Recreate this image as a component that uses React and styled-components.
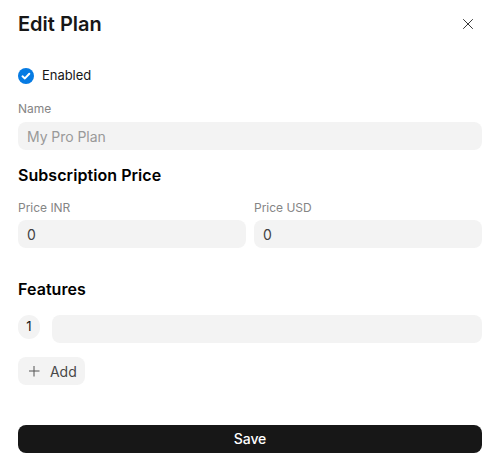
import React from "react";
import styled, { createGlobalStyle } from "styled-components";

const GlobalStyle = createGlobalStyle`
  *, *::before, *::after { box-sizing: border-box; }
  body { margin: 0; background: #fff; font-family: Inter, sans-serif; color: #171717; }
  button, input { font: inherit; }
`;

const Dialog = styled.main`
  width: 498px;
  height: 474px;
  padding: 10px 16px 0 18px;
  display: flex;
  flex-direction: column;
`;
const Header = styled.header`
  height: 28px;
  display: flex;
  align-items: center;
  justify-content: space-between;
`;
const Title = styled.h1`
  margin: 0;
  font-size: 20px;
  line-height: 28px;
  font-weight: 600;
`;
const CloseButton = styled.button`
  width: 28px;
  height: 28px;
  padding: 0;
  border: 0;
  background: transparent;
  display: grid;
  place-items: center;
`;
const CheckLabel = styled.label`
  margin-top: 30px;
  height: 16px;
  line-height: 14px;
  display: flex;
  align-items: flex-start;
  gap: 8px;
  font-size: 13px;
  letter-spacing: -0.05px;
`;
const Field = styled.div`
  flex: 1;
  display: flex;
  flex-direction: column;
`;
const NameField = styled(Field)`
  flex: none;
  margin-top: 18px;
`;
const Label = styled.label`
  height: 14px;
  line-height: 14px;
  margin-bottom: ${(p) => p.$gap}px;
  font-size: 12px;
  letter-spacing: -0.02px;
  color: #858585;
`;
const Input = styled.input`
  width: 100%;
  min-width: 0;
  height: 28px;
  padding: 1px 9px 0;
  border: 0;
  border-radius: 8px;
  background: #f3f3f3;
  color: #424242;
  font-size: 14px;
  letter-spacing: -0.05px;
  &::placeholder { color: #999; opacity: 1; }
`;
const Heading = styled.h2`
  margin: ${(p) => p.$top}px 0 0;
  height: 20px;
  line-height: 20px;
  font-size: 16px;
  font-weight: 600;
  letter-spacing: 0.06px;
  color: #000;
`;
const Prices = styled.div`
  display: flex;
  gap: 8px;
  margin-top: 16px;
`;
const FeatureRow = styled.div`
  display: flex;
  align-items: flex-start;
  gap: 12px;
  margin-top: 16px;
`;
const Badge = styled.span`
  flex: none;
  width: 22px;
  height: 24px;
  border-radius: 11px;
  background: #f3f3f3;
  font-size: 13px;
  line-height: 22px;
  text-align: center;
`;
const AddButton = styled.button`
  width: 67px;
  height: 28px;
  margin-top: 14px;
  padding: 0 8px;
  display: flex;
  align-items: center;
  gap: 8px;
  border: 0;
  border-radius: 8px;
  background: #f3f3f3;
  color: #484848;
  font-size: 14px;
  letter-spacing: -0.05px;
`;
const SaveButton = styled.button`
  flex: none;
  height: 28px;
  margin-top: 40px;
  padding: 0 0 1px;
  border: 0;
  border-radius: 8px;
  background: #171717;
  color: #fff;
  font-size: 14px;
  font-weight: 500;
  letter-spacing: -0.05px;
`;
const Body = styled.div`
  display: flex;
  flex-direction: column;
`;

export default function App() {
  return (
    <>
      <GlobalStyle />
      <Dialog>
        <Header>
          <Title>Edit Plan</Title>
          <CloseButton aria-label="Close">
            <svg width="16" height="16" viewBox="0 0 16 16" fill="none" stroke="#383838">
              <path d="M3.2 3.2l9.6 9.6M12.8 3.2L3.2 12.8" />
            </svg>
          </CloseButton>
        </Header>
        <Body>
          <CheckLabel>
            <svg width="16" height="16" viewBox="0 0 16 16" fill="none">
              <circle cx="8" cy="8" r="8" fill="#067be3" />
              <path d="M4.5 8.3l2.4 2.1 4.4-4.6" stroke="#fff" strokeWidth="2" strokeLinecap="round" strokeLinejoin="round" />
            </svg>
            Enabled
          </CheckLabel>
          <NameField>
            <Label $gap={6}>Name</Label>
            <Input placeholder="My Pro Plan" />
          </NameField>
          <Heading $top={15}>Subscription Price</Heading>
          <Prices>
            <Field>
              <Label $gap={5}>Price INR</Label>
              <Input defaultValue="0" />
            </Field>
            <Field>
              <Label $gap={5}>Price USD</Label>
              <Input defaultValue="0" />
            </Field>
          </Prices>
          <Heading $top={31}>Features</Heading>
          <FeatureRow>
            <Badge>1</Badge>
            <Input />
          </FeatureRow>
          <AddButton>
            <svg width="16" height="16" viewBox="0 0 16 16" fill="none" stroke="#525252">
              <path d="M8 3v10.5M3 8h10.5" />
            </svg>
            Add
          </AddButton>
          <SaveButton>Save</SaveButton>
        </Body>
      </Dialog>
    </>
  );
}
